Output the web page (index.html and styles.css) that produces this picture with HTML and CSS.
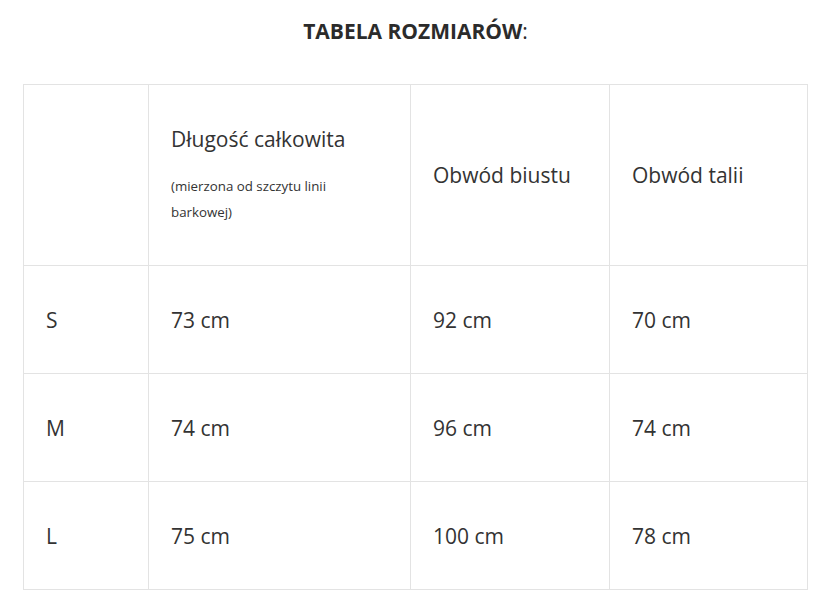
FILE: index.html
```html
<!DOCTYPE html>
<html lang="pl">
<head>
<meta charset="utf-8">
<link rel="stylesheet" href="styles.css">
</head>
<body>
<div class="page">
  <h2 class="title"><strong>TABELA ROZMIAR&Oacute;W</strong>:</h2>
  <table class="sizes">
    <colgroup>
      <col class="c1"><col class="c2"><col class="c3"><col class="c4">
    </colgroup>
    <tr class="head">
      <td></td>
      <td>
        <p class="label">Długość całkowita</p>
        <p class="note">(mierzona od szczytu linii barkowej)</p>
      </td>
      <td><p class="label">Obwód biustu</p></td>
      <td><p class="label">Obwód talii</p></td>
    </tr>
    <tr>
      <td>S</td><td>73 cm</td><td>92 cm</td><td>70 cm</td>
    </tr>
    <tr>
      <td>M</td><td>74 cm</td><td>96 cm</td><td>74 cm</td>
    </tr>
    <tr>
      <td>L</td><td>75 cm</td><td>100 cm</td><td>78 cm</td>
    </tr>
  </table>
</div>
</body>
</html>
```
FILE: styles.css
```css
html, body {
  margin: 0;
  padding: 0;
  background: #fff;
}
body {
  font-family: "Open Sans", "Noto Sans", sans-serif;
  color: #333;
}
.page {
  padding: 0 21px 0 23px;
}
.title {
  margin: 0;
  padding-top: 17px;
  height: 84px;
  box-sizing: border-box;
  text-align: center;
  font-size: 21px;
  line-height: 28px;
  font-weight: 400;
  color: #2b2b2b;
}
.title strong {
  font-weight: 700;
}
.sizes {
  width: 785px;
  border-collapse: collapse;
  table-layout: fixed;
}
.c1 { width: 125px; }
.c2 { width: 262px; }
.c3 { width: 199px; }
.c4 { width: 198px; }
.sizes td {
  border: 1px solid #e3e3e3;
  padding: 0 22px;
  height: 107px;
  vertical-align: middle;
  font-size: 21px;
  line-height: 28px;
  color: #333;
}
.sizes tr.head td {
  height: 180px;
}
.label {
  margin: 0;
  font-size: 21px;
  line-height: 28px;
}
.note {
  margin: 20px 0 0;
  max-width: 190px;
  font-size: 13.3px;
  line-height: 26px;
}
```
